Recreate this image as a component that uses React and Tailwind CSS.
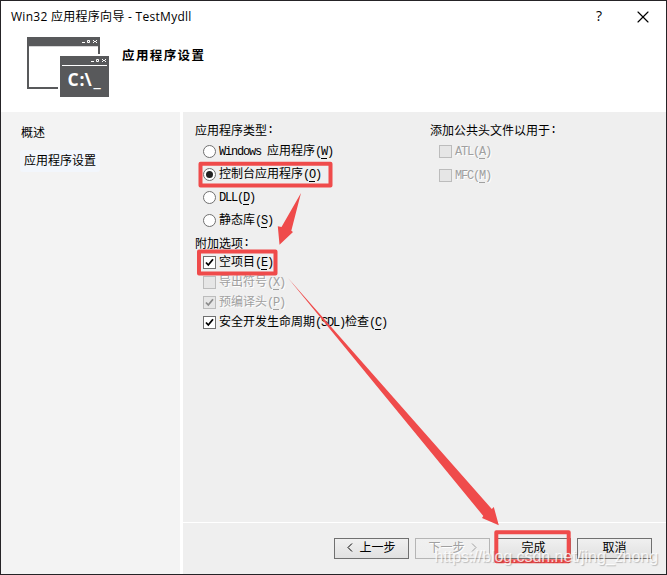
import { X } from "lucide-react";
import clsx from "clsx";

const APP_TYPES = [
  { label: "Windows 应用程序", hotkey: "W" },
  { label: "控制台应用程序", hotkey: "O", checked: true },
  { label: "DLL", hotkey: "D" },
  { label: "静态库", hotkey: "S" },
];

const OPTIONS = [
  { label: "空项目", hotkey: "E", checked: true },
  { label: "导出符号", hotkey: "X", disabled: true },
  { label: "预编译头", hotkey: "P", checked: true, disabled: true },
  { label: "安全开发生命周期(SDL)检查", hotkey: "C", checked: true },
];

const HEADERS = [
  { label: "ATL", hotkey: "A", disabled: true },
  { label: "MFC", hotkey: "M", disabled: true },
];

// Latin runs take half the width of a Chinese glyph
const Text = ({ children }) =>
  children
    .split(/([\x20-\x7e]+)/)
    .filter(Boolean)
    .map((part, i) =>
      /^[\x20-\x7e]/.test(part) ? (
        <span key={i} className="font-['Liberation_Mono',monospace] text-[12px] tracking-[-1.2px]">
          {part}
        </span>
      ) : (
        <span key={i}>{part}</span>
      )
    );

const OptionLabel = ({ label, hotkey, disabled }) => (
  <span
    className={clsx(
      "whitespace-pre leading-4",
      disabled ? "text-[#a0a0a0] [text-shadow:1px_1px_0_#fff]" : "text-black"
    )}
  >
    <Text>{label}</Text>
    <Text>(</Text>
    <span className="inline-block h-[13px] border-b border-current font-['Liberation_Mono',monospace] text-[12px] leading-[13px] tracking-[-1.2px]">
      {hotkey}
    </span>
    <Text>)</Text>
  </span>
);

const Radio = ({ checked, ...rest }) => (
  <div className="flex h-[23px] items-center gap-[3px]">
    <span className="flex size-[13px] shrink-0 items-center justify-center rounded-full border border-[#707070] bg-white">
      {checked && <span className="size-[7px] rounded-full bg-[#222]" />}
    </span>
    <span className="flex pb-[2px]">
      <OptionLabel {...rest} />
    </span>
  </div>
);

const Checkbox = ({ checked, className, ...rest }) => (
  <div className={clsx("flex items-center gap-[3px]", className)}>
    <span
      className={clsx(
        "flex size-[13px] shrink-0 items-center justify-center border",
        rest.disabled
          ? "border-[#bcbcbc] bg-[#e6e6e6] text-[#8c8c8c]"
          : "border-[#707070] bg-white text-black"
      )}
    >
      {checked && (
        <svg width="11" height="11" viewBox="0 0 11 11" fill="none">
          <path d="M2 5.5 4.3 8 9 2.3" stroke="currentColor" strokeWidth="1.8" />
        </svg>
      )}
    </span>
    <span className="flex pb-px">
      <OptionLabel {...rest} />
    </span>
  </div>
);

const WizardButton = ({ children, disabled }) => (
  <button
    type="button"
    disabled={disabled}
    className={clsx(
      "flex h-[21px] w-[75px] items-center justify-center gap-1.5 border bg-linear-to-b pb-[3px] text-[12px]",
      disabled
        ? "border-[#b5b5b5] from-[#f0f0f0] to-[#ededed] text-[#a0a0a0] [text-shadow:1px_1px_0_#fff]"
        : "border-[#707070] from-[#f0f0f0] to-[#e1e1e1] text-black"
    )}
  >
    {children}
  </button>
);

const Chevron = ({ right }) => (
  <svg width="6" height="9" viewBox="0 0 6 9" fill="none" stroke="currentColor">
    <path d={right ? "M1 .5 5 4.5 1 8.5" : "M5 .5 1 4.5 5 8.5"} />
  </svg>
);

const ConsoleIcon = () => (
  <svg width="82" height="60" viewBox="0 0 82 60" className="shrink-0">
    <path
      fill="#58595b"
      d="M0 0h73v17h-2V9.3H2V50h29v2H0ZM33 19h49v41H33Z"
    />
    <path fill="#fff" d="M35 28h45v1H35Z" />
    <g fill="none" stroke="#fff">
      <path d="M55 5.5h3M60.5 3.5h2v2h-2ZM66 3.5h1M69 3.5h1M67 4.5h2M66 5.5h1M69 5.5h1" />
      <path d="M64 24.5h3M69.5 22.5h2v2h-2ZM75 22.5h1M78 22.5h1M76 23.5h2M75 24.5h1M78 24.5h1" />
    </g>
    <text
      x="40.5 52.5 57.5 66.5"
      y="48.5"
      fill="#fff"
      className="font-['Open_Sans',sans-serif] text-[17.5px] font-bold"
    >
      C:\_
    </text>
  </svg>
);

// Red frames and arrows drawn over the dialog
const Annotations = () => (
  <svg
    className="pointer-events-none absolute inset-0"
    width="667"
    height="575"
    viewBox="0 0 667 575"
  >
    <g fill="none" stroke="#ef4b4b" strokeWidth="4" strokeLinejoin="round">
      <rect x="200.5" y="163.7" width="130" height="21.8" />
      <rect x="199" y="251.5" width="76.5" height="22" />
      <rect x="496.3" y="532.3" width="72.4" height="29" />
    </g>
    <g fill="#ef4b4b">
      <path d="M301 193 291.3 230.8 293 232 279.5 244.7 277.8 226.3 281.5 227Z" />
      <path d="M288 278 491.8 509 493.8 507 498.8 525.2 482 518 483.3 516Z" />
    </g>
  </svg>
);

export default function App() {
  return (
    <div className="relative flex h-[575px] w-[667px] flex-col overflow-hidden border border-[#252326] bg-white font-['Noto_Sans_CJK_SC',sans-serif] text-[12px] leading-4 text-black">
      <header className="h-[111px] shrink-0">
        <div className="flex h-[31px] items-center pl-2.5">
          <span className="whitespace-pre font-['Open_Sans','Noto_Sans_CJK_SC',sans-serif] text-[12px] tracking-[0.28px]">
            Win32 应用程序向导 - TestMydll
          </span>
          <span className="ml-auto pb-0.5 font-['Open_Sans',sans-serif] text-[14px]">
            ?
          </span>
          <X size={20} strokeWidth={1.4} className="ml-[31px] mr-[13px]" />
        </div>
        <div className="flex pl-[26px] pt-[5px]">
          <ConsoleIcon />
          <h1 className="ml-[13px] mt-[10px] text-[12.5px] font-bold tracking-[1.4px]">
            应用程序设置
          </h1>
        </div>
      </header>

      <div className="flex min-h-0 flex-1">
        <nav className="flex w-[179px] shrink-0 flex-col items-start bg-[#f3f3f3] pt-3">
          <span className="ml-5">概述</span>
          <span className="ml-[19px] mt-[10px] flex h-[22px] w-20 items-center rounded-[3px] bg-[#f2f6fc] pb-0.5 pl-1">
            应用程序设置
          </span>
        </nav>

        <main className="ml-[3px] flex min-w-0 flex-1 flex-col bg-[#efefef]">
          <div className="flex flex-1 pl-3 pt-2">
            <section className="w-[235px] whitespace-nowrap">
              <div className="flex h-5 items-center">
                <Text>应用程序类型:</Text>
              </div>
              <div className="pl-2">
                {APP_TYPES.map((item) => (
                  <Radio key={item.hotkey} {...item} />
                ))}
              </div>
              <div className="flex h-5 items-center pt-0.5">
                <Text>附加选项:</Text>
              </div>
              <div className="pl-2">
                {OPTIONS.map((item) => (
                  <Checkbox key={item.hotkey} className="h-5" {...item} />
                ))}
              </div>
            </section>
            <section>
              <div className="flex h-5 items-center">
                <Text>添加公共头文件以用于:</Text>
              </div>
              <div className="-mt-px pl-[9px]">
                {HEADERS.map((item) => (
                  <Checkbox key={item.hotkey} className="h-6" {...item} />
                ))}
              </div>
            </section>
          </div>

          <footer className="flex h-[52px] shrink-0 justify-end gap-1.5 border-t border-white pr-[14px] pt-[15px]">
            <WizardButton>
              <Chevron />
              上一步
            </WizardButton>
            <WizardButton disabled>
              下一步
              <Chevron right />
            </WizardButton>
            <WizardButton>完成</WizardButton>
            <WizardButton>取消</WizardButton>
          </footer>
        </main>
      </div>

      <div className="absolute -left-px -top-px">
        <Annotations />
      </div>
      <span className="absolute bottom-[7px] right-[8px] whitespace-nowrap font-['Liberation_Sans',sans-serif] text-[16px] leading-5 tracking-[-0.05px] text-white/80 [text-shadow:1px_1px_1px_rgba(0,0,0,0.22)]">
        https://blog.csdn.net/jing_zhong
      </span>
    </div>
  );
}
